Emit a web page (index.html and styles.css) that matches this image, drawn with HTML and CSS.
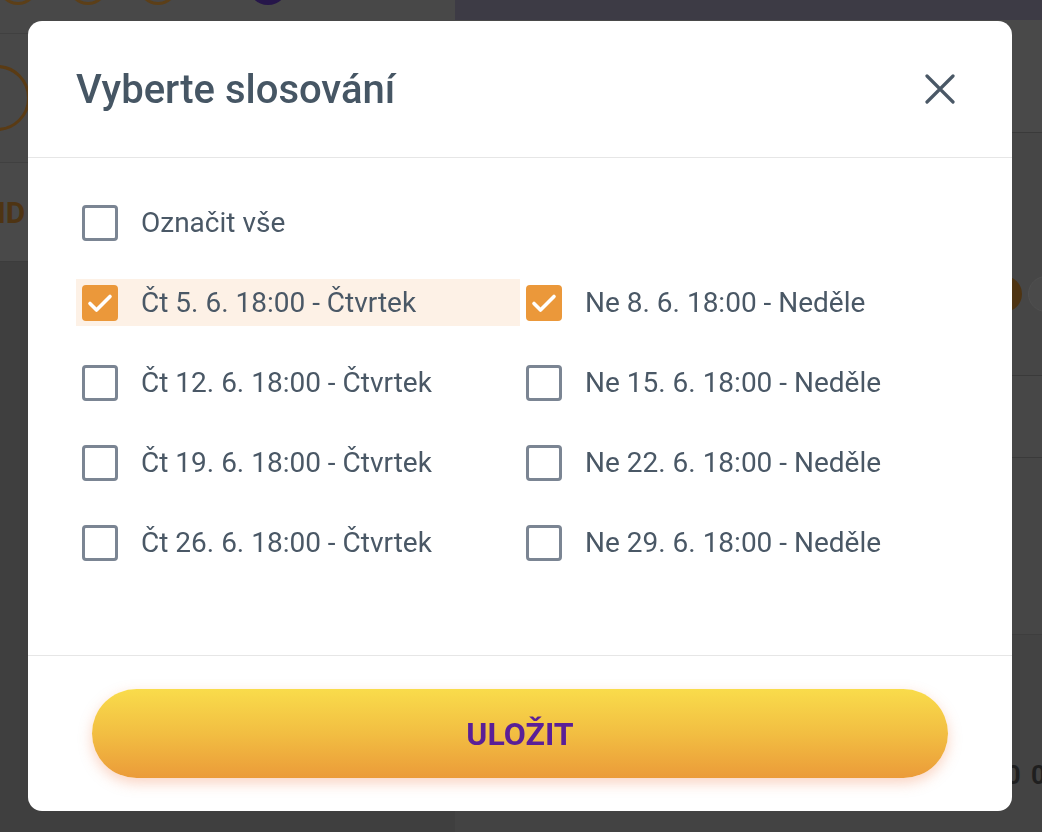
FILE: index.html
```html
<!DOCTYPE html>
<html lang="cs">
<head>
<meta charset="utf-8">
<title>Vyberte slosování</title>
<link rel="stylesheet" href="styles.css">
</head>
<body>
<div class="bg">
  <div class="bg-left">
    <div class="bg-top">
      <span class="dot dot-o"></span><span class="dot dot-o"></span><span class="dot dot-o"></span><span class="dot dot-p"></span>
    </div>
    <div class="bg-avatar"><span class="ring"></span></div>
    <div class="bg-id">ID</div>
    <div class="bg-rest"></div>
  </div>
  <div class="bg-right">
    <div class="bg-head"></div>
    <div class="bg-r1"></div>
    <div class="bg-r2"><span class="mini mini-o"></span><span class="mini mini-g"></span></div>
    <div class="bg-r3"></div>
    <div class="bg-r4"></div>
    <div class="bg-r5"><span class="bg-num">0 0</span></div>
  </div>
</div>

<div class="overlay">
  <div class="modal" role="dialog" aria-labelledby="mt">
    <div class="modal-header">
      <h2 id="mt" class="modal-title">Vyberte slosování</h2>
      <button class="close" aria-label="Zavřít">
        <svg width="30" height="30" viewBox="0 0 30 30"><path d="M2 2 L28 28 M28 2 L2 28" stroke="#4a5866" stroke-width="3.2" stroke-linecap="round" fill="none"/></svg>
      </button>
    </div>
    <div class="modal-body">
      <div class="opts">
        <label class="opt opt-all"><span class="box"></span><span class="txt">Označit vše</span></label>
        <label class="opt opt-hl"><span class="box on"><svg width="30" height="30" viewBox="0 0 30 30"><path d="M5 15.5 L11.5 22 L25 8.5" stroke="#fff" stroke-width="3.6" stroke-linecap="round" stroke-linejoin="round" fill="none"/></svg></span><span class="txt">Čt 5. 6. 18:00 - Čtvrtek</span></label>
        <label class="opt"><span class="box on"><svg width="30" height="30" viewBox="0 0 30 30"><path d="M5 15.5 L11.5 22 L25 8.5" stroke="#fff" stroke-width="3.6" stroke-linecap="round" stroke-linejoin="round" fill="none"/></svg></span><span class="txt">Ne 8. 6. 18:00 - Neděle</span></label>
        <label class="opt"><span class="box"></span><span class="txt">Čt 12. 6. 18:00 - Čtvrtek</span></label>
        <label class="opt"><span class="box"></span><span class="txt">Ne 15. 6. 18:00 - Neděle</span></label>
        <label class="opt"><span class="box"></span><span class="txt">Čt 19. 6. 18:00 - Čtvrtek</span></label>
        <label class="opt"><span class="box"></span><span class="txt">Ne 22. 6. 18:00 - Neděle</span></label>
        <label class="opt"><span class="box"></span><span class="txt">Čt 26. 6. 18:00 - Čtvrtek</span></label>
        <label class="opt"><span class="box"></span><span class="txt">Ne 29. 6. 18:00 - Neděle</span></label>
      </div>
    </div>
    <div class="modal-footer">
      <button class="save">ULOŽIT</button>
    </div>
  </div>
</div>
</body>
</html>
```

FILE: styles.css
```css
* { box-sizing: border-box; }
html, body { margin: 0; padding: 0; height: 100%; }
body {
  font-family: Roboto, "Noto Sans", "Liberation Sans", sans-serif;
  background: #3f3f3f;
  overflow: hidden;
}

/* dimmed page underneath */
.bg {
  display: grid;
  grid-template-columns: 455px 1fr;
  height: 100vh;
}
.bg-left { display: flex; flex-direction: column; background: #484848; }
.bg-top {
  height: 34px;
  border-bottom: 1px solid #404040;
  display: flex;
  gap: 30px;
  overflow: hidden;
}
.dot { width: 40px; height: 40px; border-radius: 50%; margin-top: -35px; flex: none; }
.dot-o { border: 3px solid #5c3f18; }
.dot-o:first-child { margin-left: -2px; }
.dot-p { background: #26164a; margin-left: 40px; }
.bg-avatar {
  height: 129px;
  border-bottom: 1px solid #404040;
  display: flex;
  align-items: center;
  overflow: hidden;
}
.ring { width: 66px; height: 66px; border-radius: 50%; border: 3px solid #5a3b14; margin-left: -36px; flex: none; }
.bg-id {
  height: 99px;
  border-bottom: 1px solid #3c3c3c;
  display: flex;
  align-items: center;
  font-size: 30px;
  font-weight: 700;
  color: #4e3413;
  margin-left: -3px;
  background: #494949;
}
.bg-rest { flex: 1; background: #3f3f3f; }

.bg-right { display: flex; flex-direction: column; background: #474747; }
.bg-head { height: 20px; background: #3d3b45; }
.bg-r1 { height: 113px; border-bottom: 1px solid #3a3a3a; background: #494949; }
.bg-r2 {
  height: 243px;
  border-bottom: 1px solid #3a3a3a;
  background: #464646;
  display: flex;
  justify-content: flex-end;
  align-items: flex-start;
  padding-top: 143px;
  gap: 6px;
  overflow: hidden;
}
.mini { width: 36px; height: 36px; border-radius: 50%; flex: none; }
.mini-o { background: #4e3412; }
.mini-g { background: #4a4a4a; margin-right: -22px; border: 1px solid #505050; }
.bg-r3 { height: 82px; border-bottom: 1px solid #3a3a3a; background: #474747; }
.bg-r4 { height: 177px; border-bottom: 1px solid #3e3e3e; background: #464646; }
.bg-r5 { flex: 1; background: #434343; display: flex; justify-content: flex-end; padding-top: 125px; }
.bg-num { font-size: 26px; font-weight: 700; color: #1f1f1f; margin-right: -6px; letter-spacing: 2px; }

/* overlay + modal */
.overlay {
  position: fixed;
  inset: 0;
  display: flex;
  align-items: center;
  justify-content: flex-start;
  padding: 21px 30px 21px 28px;
}
.modal {
  width: 984px;
  height: 790px;
  background: #fff;
  border-radius: 14px;
  display: flex;
  flex-direction: column;
  overflow: hidden;
}
.modal-header {
  height: 137px;
  border-bottom: 1px solid #e6e6e6;
  display: flex;
  align-items: center;
  justify-content: space-between;
  padding: 0 47px 0 48px;
}
.modal-title {
  margin: 0;
  font-size: 40px;
  font-weight: 500;
  color: #465664;
  letter-spacing: 0;
}
.close {
  width: 50px;
  height: 50px;
  border: 0;
  background: none;
  padding: 0;
  display: flex;
  align-items: center;
  justify-content: center;
  cursor: pointer;
}
.modal-body {
  padding: 41px 48px 0;
  height: 498px;
  border-bottom: 1px solid #e6e6e6;
}
.opts {
  display: grid;
  grid-template-columns: 1fr 1fr;
  row-gap: 33px;
  grid-auto-rows: 47px;
}
.opt {
  display: flex;
  align-items: center;
  gap: 23px;
  padding: 0 6px;
  cursor: pointer;
}
.opt-all { grid-column: 1 / -1; }
.opt-hl { background: #fdf1e6; }
.box {
  width: 36px;
  height: 36px;
  border: 3px solid #7b8593;
  border-radius: 4px;
  flex: none;
  display: flex;
  align-items: center;
  justify-content: center;
  background: #fff;
}
.box.on { background: #eb983a; border-color: #eb983a; }
.txt {
  font-size: 28px;
  color: #4a5866;
  white-space: nowrap;
}
.modal-footer {
  flex: 1;
  display: flex;
  align-items: center;
  padding: 0 64px;
}
.save {
  width: 100%;
  height: 89px;
  border: 0;
  border-radius: 45px;
  background: linear-gradient(180deg, #f9dc4b 0%, #f2be42 50%, #eb9b39 100%);
  box-shadow: 0 5px 14px rgba(240, 130, 80, 0.35);
  font-family: Roboto, "Noto Sans", "Liberation Sans", sans-serif;
  font-size: 32px;
  font-weight: 700;
  color: #5a1f97;
  cursor: pointer;
}
```
